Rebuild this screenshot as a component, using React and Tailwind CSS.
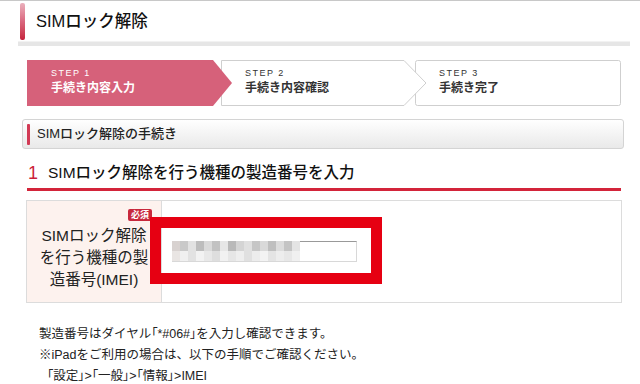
import React from 'react';

const mosaicTop = [
    'bg-[#d8d2d0]', 'bg-[#c9c9c9]', 'bg-[#e2e2e2]', 'bg-[#bdbdbd]', 'bg-[#dadada]', 'bg-[#c2c2c2]',
    'bg-[#e6e6e6]', 'bg-[#b9b9b9]', 'bg-[#d4d4d4]', 'bg-[#e0e0e0]', 'bg-[#c6c6c6]', 'bg-[#d9d9d9]',
    'bg-[#bfbfbf]', 'bg-[#dcdcdc]', 'bg-[#c4c4c4]', 'bg-[#e4e4e4]',
];
const mosaicBottom = [
    'bg-[#e9e5e3]', 'bg-[#f0f0f0]', 'bg-[#e2e2e2]', 'bg-[#f2f2f2]', 'bg-[#e8e8e8]', 'bg-[#dedede]',
    'bg-[#f1f1f1]', 'bg-[#e6e6e6]', 'bg-[#eeeeee]', 'bg-[#e0e0e0]', 'bg-[#ececec]', 'bg-[#f3f3f3]',
    'bg-[#e4e4e4]', 'bg-[#ededed]', 'bg-[#e7e7e7]', 'bg-[#f0f0f0]',
];

const Step = ({ num, title, active, last, className }) => (
    <div className={`relative h-[46px] w-[206px] ${className}`}>
        <svg className="absolute inset-0" width="206" height="46" viewBox="0 0 206 46">
            {active && <polygon points="0,0 186,0 205,23 186,46 0,46" fill="#d6617a" />}
            {!active && !last && (
                <polygon points="0.5,0.5 183,0.5 205,23 183,45.5 0.5,45.5" fill="#fff" stroke="#cfcfcf" />
            )}
            {last && <rect x="0.5" y="0.5" width="205" height="45" rx="2" fill="#fff" stroke="#cfcfcf" />}
        </svg>
        <div className={`relative pl-6 pt-[8px] ${active ? 'text-white' : 'text-[#333]'}`}>
            <div className="text-[9px] leading-[11px] tracking-[1.5px]">STEP {num}</div>
            <div className="text-[12px] leading-[16px] font-bold mt-[1px]">{title}</div>
        </div>
    </div>
);

const App = () => {
    return (
        <div className="w-[640px] h-[384px] overflow-hidden bg-white border-t border-[#c8c8c8] text-[#222] font-['Liberation_Sans','Noto_Sans_CJK_JP',sans-serif]">
            {/* page title */}
            <div className="ml-[18px] w-[612px]">
                <div className="flex items-center h-[40px] pl-[2px]">
                    <div className="w-[5px] h-[37px] rounded-[2px] bg-gradient-to-b from-[#eab0bd] via-[#d9667e] to-[#c51f3c]" />
                    <h1 className="ml-[11px] text-[16.5px] leading-none font-medium text-[#111]">SIMロック解除</h1>
                </div>
                <div className="h-[5px] bg-[#e6e6e6] border-t border-[#f2f2f2]" />
            </div>

            {/* steps */}
            <div className="flex ml-[27px] mt-[14px]">
                <Step num="1" title="手続き内容入力" active className="z-30 w-[205px]" />
                <Step num="2" title="手続き内容確認" className="z-20 -ml-3" />
                <Step num="3" title="手続き完了" last className="z-10 -ml-3" />
            </div>

            {/* section header */}
            <div className="ml-[22px] mt-[13px] w-[602px] h-[30px] flex items-center rounded-[3px] border border-[#d4d4d4] bg-gradient-to-b from-white to-[#e9e9e9]">
                <div className="ml-[4px] w-[3px] h-[21px] rounded-[1px] bg-[#d23a55]" />
                <span className="ml-[7px] text-[13px] font-medium text-[#222]">SIMロック解除の手続き</span>
            </div>

            {/* heading */}
            <div className="ml-[27px] mt-[9px] w-[594px] h-[33px] flex items-center border-b-[3px] border-[#d3243a]">
                <span className="ml-[1px] text-[18px] leading-none text-[#cc1f3a]">1</span>
                <h2 className="ml-[10px] text-[15.5px] leading-none font-medium text-[#111]">SIMロック解除を行う機種の製造番号を入力</h2>
            </div>

            {/* form table */}
            <div className="relative ml-[26px] mt-[9px] w-[596px] h-[103px] flex border border-[#dcdcdc]">
                <div className="relative w-[135px] bg-[#fdf2ee] border-r border-[#dcdcdc] flex items-center justify-center">
                    <span className="absolute top-[8px] right-[9px] px-[3px] rounded-[2px] bg-[#c8283c] text-white text-[9px] leading-[12px] font-bold">必須</span>
                    <p className="mt-[12px] text-center text-[15.5px] leading-[22px] text-[#222]">
                        SIMロック解除<br />を行う機種の製<br />造番号(IMEI)
                    </p>
                </div>
                <div className="flex-1 flex items-center pl-[10px]">
                    <div className="relative w-[185px] h-[21px] border border-[#d8d8d8] border-t-[#999] bg-white">
                        <div className="absolute -top-px -left-px grid grid-cols-[repeat(16,8px)] grid-rows-[10px_10px]">
                            {mosaicTop.map((c, i) => <div key={'t' + i} className={c} />)}
                            {mosaicBottom.map((c, i) => <div key={'b' + i} className={c} />)}
                        </div>
                    </div>
                </div>
                {/* highlight annotation */}
                <div className="absolute left-[123px] top-[16px] w-[232px] h-[67px] border-[11px] border-[#e60012]" />
            </div>

            {/* notes */}
            <div className="ml-[39px] mt-[21px] text-[12.5px] leading-[21px] text-[#222]">
                <p>製造番号はダイヤル<span className="[font-feature-settings:'palt']">「*#06#」</span>を入力し確認できます。</p>
                <p>※iPadをご利用の場合は、以下の手順でご確認ください。</p>
                <p className="pl-[8px] [font-feature-settings:'palt']">「設定」&gt;「一般」&gt;「情報」&gt;IMEI</p>
            </div>
        </div>
    );
};

export default App;
